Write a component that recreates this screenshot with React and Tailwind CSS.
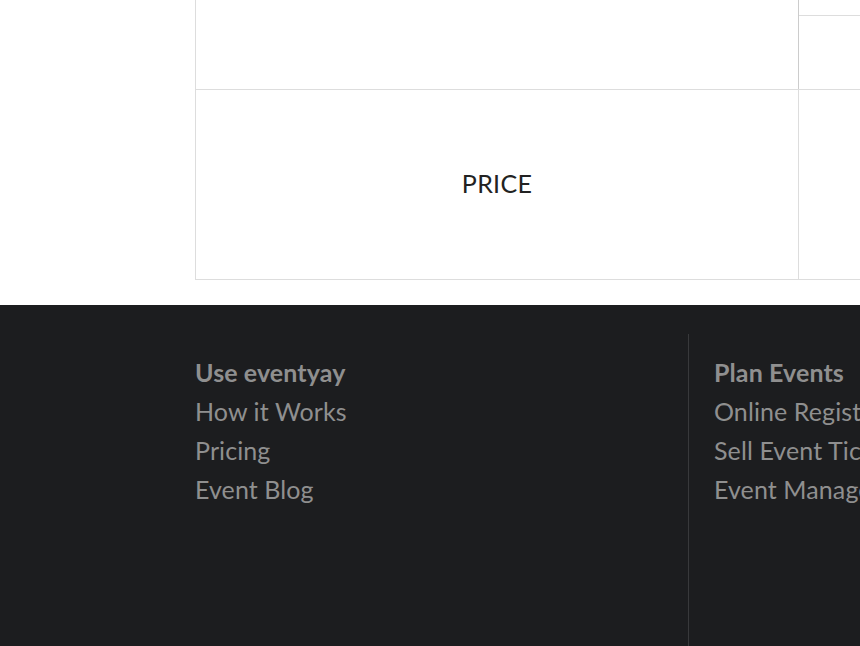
export default function App() {
  const useLinks = ['How it Works', 'Pricing', 'Event Blog']
  const planLinks = ['Online Registration', 'Sell Event Tickets', 'Event Management Software']

  return (
    <div className="w-[860px] h-[646px] overflow-hidden bg-white font-['Lato',sans-serif]">
      <section className="h-[305px] pl-[195px]">
        <div className="flex w-[900px] border-l border-[#dddddd]">
          <div className="w-[603px] shrink-0 border-r border-[#cccccc] h-[89px]" />
          <div className="flex-1 flex flex-col">
            <div className="h-[16px] border-b border-[#dddddd]" />
            <div className="flex-1" />
          </div>
        </div>
        <div className="flex w-[900px] h-[191px] border-l border-t border-b border-[#dddddd]">
          <div className="w-[603px] shrink-0 border-r border-[#dddddd] flex items-center justify-center pb-[2px]">
            <span className="text-[25px] text-[#222222] tracking-[0.3px]">PRICE</span>
          </div>
          <div className="flex-1" />
        </div>
      </section>

      <footer className="h-[341px] bg-[#1c1d1f] pt-[29px] pl-[195px]">
        <div className="flex h-full">
          <div className="w-[494px] shrink-0 pt-[19px] border-r border-[#38393b]">
            <ul className="text-[25px] leading-[39px] text-[#8f8f8f] tracking-[0.1px]">
              <li className="font-bold">Use eventyay</li>
              {useLinks.map((l) => (
                <li key={l}>{l}</li>
              ))}
            </ul>
          </div>
          <div className="pl-[25px] pt-[19px] whitespace-nowrap">
            <ul className="text-[25px] leading-[39px] text-[#8f8f8f] tracking-[0.1px]">
              <li className="font-bold">Plan Events</li>
              {planLinks.map((l) => (
                <li key={l}>{l}</li>
              ))}
            </ul>
          </div>
        </div>
      </footer>
    </div>
  )
}
